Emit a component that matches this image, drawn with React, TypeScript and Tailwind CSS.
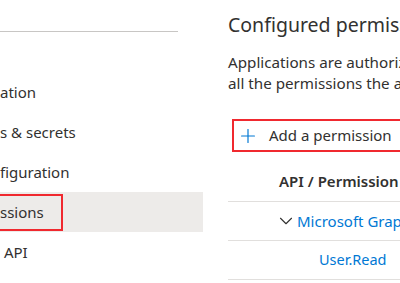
import { Plus, ChevronDown } from "lucide-react";

const navItems = [
  { label: "ation", active: false },
  { label: "s & secrets", active: false },
  { label: "figuration", active: false },
  { label: "ssions", active: true },
  { label: " API", active: false },
];

const App = () => {
  return (
    <div className="w-[400px] h-[283px] overflow-hidden bg-white flex text-[#323130] font-['Noto_Sans',sans-serif]">
      <aside className="w-[203px] shrink-0 flex flex-col">
        <div className="h-[32px] w-[178px] border-b border-[#c8c6c4]" />
        <nav className="mt-[40px] flex flex-col">
          {navItems.map((item) => (
            <div
              key={item.label}
              className={`h-10 flex items-center ${item.active ? "bg-[#edebe9]" : ""}`}
            >
              {item.active ? (
                <div className="h-[37px] w-[63px] border-2 border-l-0 border-[#f0292f] flex items-center">
                  <span className="text-[15px] whitespace-pre">{item.label}</span>
                </div>
              ) : (
                <span className="text-[15px] whitespace-pre">{item.label}</span>
              )}
            </div>
          ))}
        </nav>
      </aside>

      <main className="flex-1 pl-[25px] pt-[11px] min-w-0">
        <h2 className="text-[19.5px] leading-7 whitespace-nowrap">Configured permissions</h2>
        <p className="mt-[13px] text-[15.2px] leading-[21px] whitespace-nowrap">
          Applications are authorized to call APIs when they are granted permissions
          <br />
          all the permissions the application needs.
        </p>
        <div className="mt-[25px] ml-[4px] h-[33px] w-[200px] border-2 border-r-0 border-[#f0292f] flex items-center">
          <Plus size={22} strokeWidth={1.3} className="ml-[3px] shrink-0 text-[#0078d4]" />
          <span className="ml-[10px] text-[15px] whitespace-nowrap">Add a permission</span>
        </div>
        <div className="mt-[10px]">
          <div className="h-[40px] border-b border-[#e1dfdd] flex items-center pl-[51px]">
            <span className="text-[15px] font-semibold whitespace-nowrap">API / Permission name</span>
          </div>
          <div className="h-[39px] border-b border-[#e1dfdd] flex items-center pl-[47px]">
            <ChevronDown size={22} strokeWidth={1.2} className="shrink-0 text-[#323130]" />
            <span className="text-[15px] text-[#0078d4] whitespace-nowrap">Microsoft Graph (1)</span>
          </div>
          <div className="h-[39px] border-b border-[#e1dfdd] flex items-center pl-[91px]">
            <span className="text-[14.5px] text-[#0078d4] whitespace-nowrap">User.Read</span>
          </div>
        </div>
      </main>
    </div>
  );
};

export default App;
